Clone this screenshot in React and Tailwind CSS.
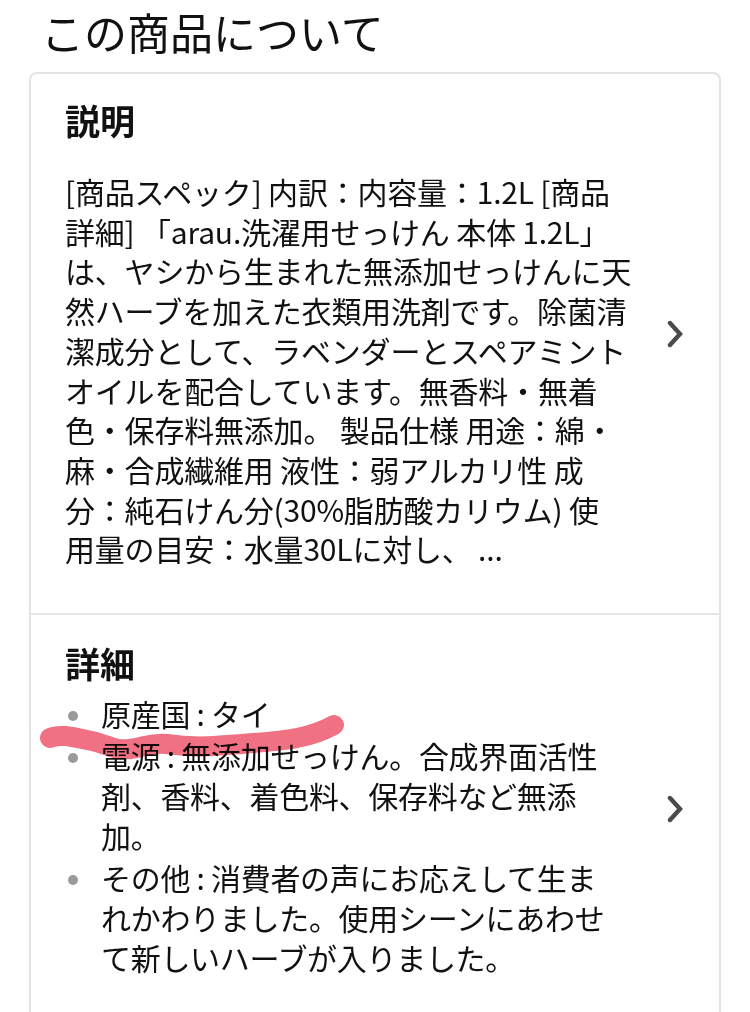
import React from "react";

const font = { fontFamily: '"Noto Sans CJK JP", "Noto Sans", sans-serif' };

function Chevron() {
  return (
    <svg width="20" height="28" viewBox="0 0 20 28" className="shrink-0">
      <polyline points="5,3 15,14 5,25" fill="none" stroke="#4a4a4a" strokeWidth="4.4" strokeLinecap="round" strokeLinejoin="miter" />
    </svg>
  );
}

const desc = [
  "[商品スペック] 内訳：内容量：1.2L [商品",
  "詳細] 「arau.洗濯用せっけん 本体 1.2L」",
  "は、ヤシから生まれた無添加せっけんに天",
  "然ハーブを加えた衣類用洗剤です。除菌清",
  "潔成分として、ラベンダーとスペアミント",
  "オイルを配合しています。無香料・無着",
  "色・保存料無添加。 製品仕様 用途：綿・",
  "麻・合成繊維用 液性：弱アルカリ性 成",
  "分：純石けん分(30%脂肪酸カリウム) 使",
  "用量の目安：水量30Lに対し、 ...",
];

const bullets = [
  ["原産国 : タイ"],
  ["電源 : 無添加せっけん。合成界面活性", "剤、香料、着色料、保存料など無添", "加。"],
  ["その他 : 消費者の声にお応えして生ま", "れかわりました。使用シーンにあわせ", "て新しいハーブが入りました。"],
];

export default function App() {
  return (
    <div className="relative w-[750px] min-h-[1012px] bg-white overflow-hidden text-[#111]" style={font}>
      <h1 className="pl-[41px] text-[43px] leading-[62px] font-normal text-[#111]">この商品について</h1>
      <div className="mt-[10px] ml-[29px] w-[692px] border-2 border-[#e3e3e3] rounded-[8px] border-b-0 rounded-b-none">
        <div className="flex items-center pl-[34px] pr-[34px] pt-[24px] pb-[44px] border-b-2 border-[#e6e6e6]">
          <div className="flex-1">
            <h2 className="text-[35px] leading-[44px] font-bold">説明</h2>
            <div className="mt-[30px] text-[30px] leading-[39.7px] tracking-[-0.2px]">
              {desc.map((l, i) => (
                <div key={i} className="whitespace-nowrap">{l}</div>
              ))}
            </div>
          </div>
          <Chevron />
        </div>
        <div className="flex items-center pl-[34px] pr-[34px] pt-[26px] pb-[46px]">
          <div className="flex-1">
            <h2 className="text-[35px] leading-[44px] font-bold">詳細</h2>
            <ul className="mt-[8px] flex flex-col gap-[2px]">
              {bullets.map((b, i) => (
                <li key={i} className="flex">
                  <span className="w-[36px] shrink-0 flex justify-start pt-[18px] pl-[3px]">
                    <span className="block w-[10px] h-[10px] rounded-full bg-[#9a9a9a]"></span>
                  </span>
                  <div className="text-[30px] leading-[40px] tracking-[-0.3px]">
                    {b.map((l, j) => (
                      <div key={j} className="whitespace-nowrap">{l}</div>
                    ))}
                  </div>
                </li>
              ))}
            </ul>
          </div>
          <Chevron />
        </div>
      </div>
      <svg className="absolute left-0 top-0 pointer-events-none mix-blend-multiply" width="750" height="1012" viewBox="0 0 750 1012">
        <path
          d="M50 738 C 62 733, 76 738, 92 741 C 106 744, 114 751, 130 749 C 146 747, 152 742, 167 744 C 187 747, 207 747, 227 745 C 252 743, 277 742, 297 738 C 313 735, 325 730, 334 725"
          fill="none"
          stroke="#ee6276"
          strokeOpacity="0.9"
          strokeWidth="20"
          strokeLinecap="round"
          strokeLinejoin="round"
        />
      </svg>
    </div>
  );
}
